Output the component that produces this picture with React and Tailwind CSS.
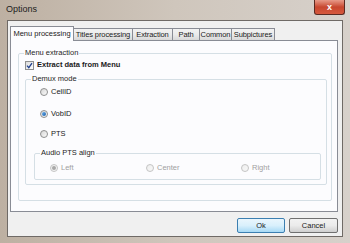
const FONT = { fontFamily: '"Liberation Sans", Arial, sans-serif' }

const TABS = [
  { label: 'Menu processing', w: 'w-[64px]' },
  { label: 'Titles processing', w: 'w-[60px]' },
  { label: 'Extraction', w: 'w-[41px]' },
  { label: 'Path', w: 'w-[28px]' },
  { label: 'Common', w: 'w-[33px]' },
  { label: 'Subpictures', w: 'w-[44px]' },
]

function Radio({ checked, disabled }) {
  return (
    <span
      className={`flex h-[8px] w-[8px] shrink-0 items-center justify-center rounded-full border ${
        disabled
          ? 'border-[#c4c4c4] bg-gradient-to-br from-[#eeeeee] to-[#f8f8f8]'
          : 'border-[#8e8f8f] bg-gradient-to-br from-[#d6d6d6] to-[#fbfbfb]'
      }`}
    >
      {checked && (
        <span
          className={`h-[4px] w-[4px] rounded-full ${
            disabled ? 'bg-[#a8a8a8]' : 'bg-gradient-to-br from-[#6ab1f1] to-[#1a5fa8]'
          }`}
        />
      )}
    </span>
  )
}

function Checkbox() {
  return (
    <span className="flex h-[9px] w-[9px] shrink-0 items-center justify-center border border-[#8e8f8f] bg-gradient-to-br from-[#dcdcdc] to-[#fdfdfd]">
      <svg viewBox="0 0 7 7" className="h-[7px] w-[7px]">
        <path d="M1 3.6 L2.8 5.6 L6 1.2" fill="none" stroke="#21408d" strokeWidth="1.3" />
      </svg>
    </span>
  )
}

function GroupBox({ title, className, children }) {
  return (
    <fieldset className={`rounded-[2px] border border-[#d5dfe5] ${className}`}>
      <legend className="ml-[5px] px-[1px] text-[7.5px] leading-[10px] text-[#1e1e1e]">{title}</legend>
      {children}
    </fieldset>
  )
}

export default function App() {
  return (
    <div
      className="relative h-[243px] w-[350px] overflow-hidden whitespace-nowrap bg-gradient-to-r from-[#bdb0a2] via-[#cfc6bc] to-[#d7d1cb] text-[7.5px] text-[#1a1a1a]"
      style={FONT}
    >
      {/* title bar */}
      <div className="flex h-[20px] items-start">
        <span className="mt-[3px] ml-[6px] text-[9px] leading-[12px] text-[#1c1c1c]">Options</span>
        <div className="ml-auto mr-[5px] flex h-[15px] w-[31px] items-center justify-center rounded-b-[3px] border border-t-0 border-[#5a2a22] bg-gradient-to-b from-[#e79a89] via-[#c7472f] to-[#d6583c]">
          <span className="text-[9px] font-bold leading-none text-white">x</span>
        </div>
      </div>

      {/* client */}
      <div className="ml-[7px] flex h-[217px] w-[336px] flex-col border border-[#6f6a66] bg-[#f0f0f0] pl-[2px] pr-[4px]">
        {/* tabs */}
        <div className="mt-[4px] flex h-[15px] items-end">
          {TABS.map((t, i) =>
            i === 0 ? (
              <div
                key={t.label}
                className={`relative z-10 -mb-[1px] flex h-[15px] ${t.w} items-center justify-center border border-b-0 border-[#898c95] bg-[#fcfcfe]`}
              >
                {t.label}
              </div>
            ) : (
              <div
                key={t.label}
                className={`-ml-[1px] flex h-[12px] ${t.w} items-center justify-center border border-b-0 border-[#898c95] bg-gradient-to-b from-[#f2f2f2] via-[#ebebeb] to-[#d8d8d8] tracking-[-0.1px]`}
              >
                {t.label}
              </div>
            ),
          )}
        </div>

        {/* tab page */}
        <div className="flex h-[172px] flex-col border border-[#898c95] bg-[#fcfcfe] pl-[7px] pr-[5px]">
          <GroupBox title="Menu extraction" className="mt-[7px] h-[153px]">
            <div className="ml-[6px] mt-[2px] flex h-[10px] items-center gap-[3px]">
              <Checkbox />
              <span className="font-bold">Extract data from Menu</span>
            </div>

            <GroupBox title="Demux mode" className="ml-[6px] mt-[4px] h-[111px] w-[302px]">
              <div className="ml-[14px] mt-[3px] flex h-[10px] items-center gap-[3px]">
                <Radio />
                <span>CellID</span>
              </div>
              <div className="ml-[14px] mt-[12px] flex h-[10px] items-center gap-[3px]">
                <Radio checked />
                <span>VobID</span>
              </div>
              <div className="ml-[14px] mt-[10px] flex h-[10px] items-center gap-[3px]">
                <Radio />
                <span>PTS</span>
              </div>

              <GroupBox title="Audio PTS align" className="ml-[8px] mt-[9px] h-[32px] w-[287px]">
                <div className="ml-[15px] mt-[5px] flex h-[10px] items-center text-[#a0a0a0]">
                  <div className="flex w-[96px] items-center gap-[3px]">
                    <Radio checked disabled />
                    <span>Left</span>
                  </div>
                  <div className="flex w-[95px] items-center gap-[3px]">
                    <Radio disabled />
                    <span>Center</span>
                  </div>
                  <div className="flex items-center gap-[3px]">
                    <Radio disabled />
                    <span>Right</span>
                  </div>
                </div>
              </GroupBox>
            </GroupBox>
          </GroupBox>
        </div>

        {/* buttons */}
        <div className="mt-[6px] flex justify-end gap-[4px]">
          <button className="flex h-[15px] w-[48px] items-center justify-center rounded-[2px] border border-[#3c7fb1] bg-gradient-to-b from-[#eaf6fd] via-[#d9f0fc] to-[#a7d9f5] text-[7.5px] leading-none">
            Ok
          </button>
          <button className="flex h-[15px] w-[49px] items-center justify-center rounded-[2px] border border-[#707070] bg-gradient-to-b from-[#f2f2f2] via-[#ebebeb] to-[#cfcfcf] text-[7.5px] leading-none">
            Cancel
          </button>
        </div>
      </div>
    </div>
  )
}
